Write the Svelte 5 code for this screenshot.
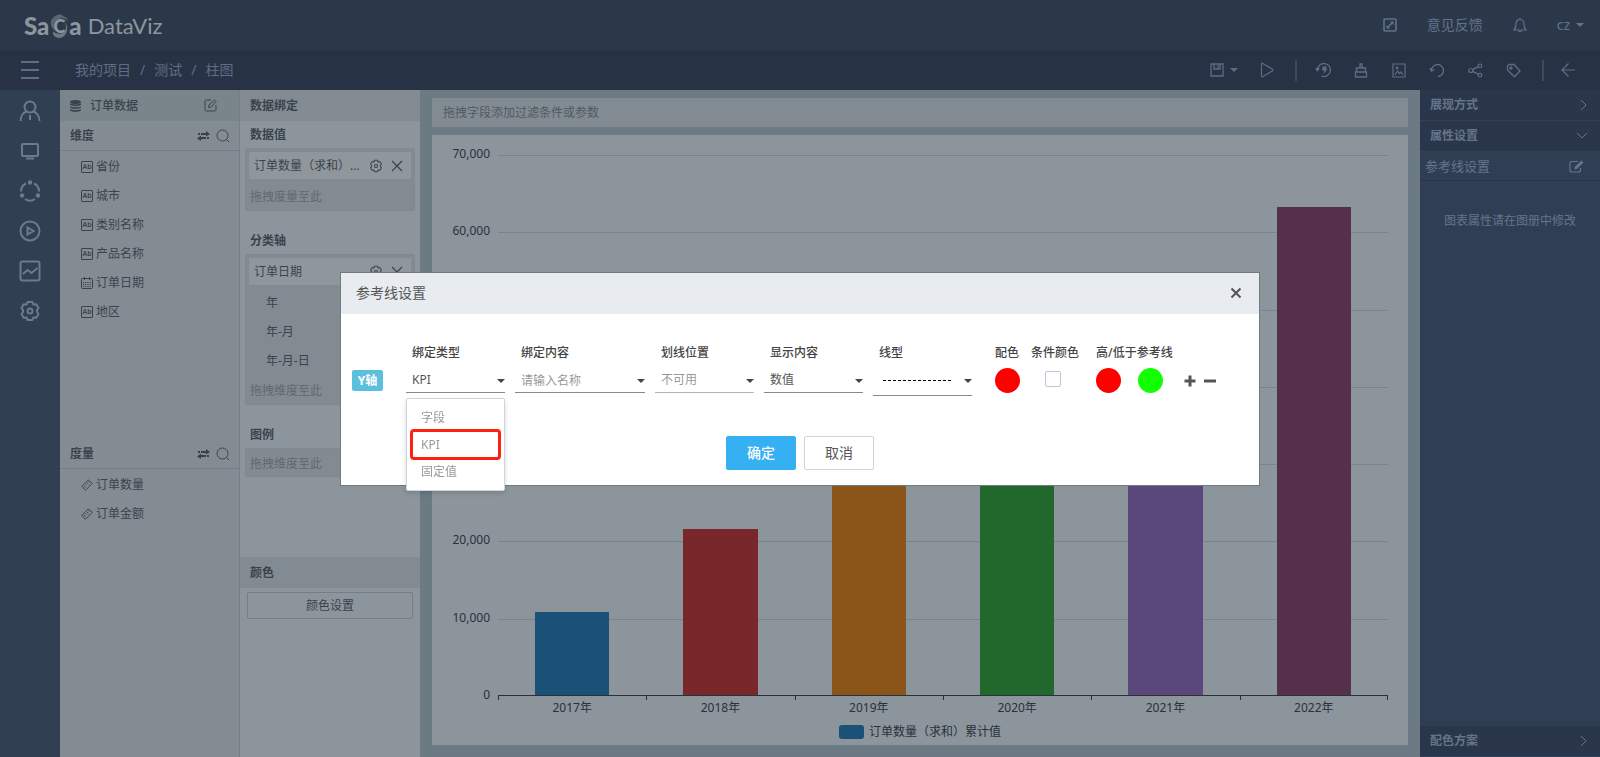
<script lang="ts">
	type Field = { name: string; kind: 'text' | 'date' | 'measure' };

	const breadcrumb = ['我的项目', '测试', '柱图'];

	const dimensions: Field[] = [
		{ name: '省份', kind: 'text' },
		{ name: '城市', kind: 'text' },
		{ name: '类别名称', kind: 'text' },
		{ name: '产品名称', kind: 'text' },
		{ name: '订单日期', kind: 'date' },
		{ name: '地区', kind: 'text' }
	];
	const measures: Field[] = [
		{ name: '订单数量', kind: 'measure' },
		{ name: '订单金额', kind: 'measure' }
	];

	const dateLevels = ['年', '年-月', '年-月-日'];

	const axisMax = 70000;
	const ticks = [70000, 60000, 50000, 40000, 30000, 20000, 10000];
	const series = [
		{ label: '2017年', value: 10700, color: '#1b5078' },
		{ label: '2018年', value: 21500, color: '#78272b' },
		{ label: '2019年', value: 35000, color: '#8b5519' },
		{ label: '2020年', value: 41000, color: '#22672c' },
		{ label: '2021年', value: 48000, color: '#5a487a' },
		{ label: '2022年', value: 63300, color: '#55304a' }
	];

	const bindTypes = ['字段', 'KPI', '固定值'];
	let bindType = $state('KPI');
	let bindContent = $state('');
	let useCondition = $state(false);
</script>

{#snippet gear()}
	<svg width="14" height="14" viewBox="0 0 22 22" fill="none" stroke="currentColor" stroke-width="1.6">
		<path d="M8.500 2h5l.8 2.500 3-.3 2.200 3.800-1.500 2v2l1.500 2-2.200 3.800-3-.3-.8 2.500h-5l-.8-2.500-3 .3L2.500 14 4 12v-2L2.500 8l2.200-3.800 3 .3z" />
		<circle cx="11" cy="11" r="2.500" />
	</svg>
{/snippet}

{#snippet cross()}
	<svg width="12" height="12" viewBox="0 0 12 12" fill="none" stroke="currentColor" stroke-width="1.2">
		<path d="M1 1l10 10M11 1L1 11" />
	</svg>
{/snippet}

{#snippet groupTools()}
	<span class="group-tools">
		<button aria-label="切换">
			<svg width="13" height="10" viewBox="0 0 13 10" fill="currentColor">
				<path d="M4 2h5V0l4 3-4 2.500V4H4zM1 2h2v2H1zM9 6H4V4.500L0 7.500 4 10V8h5zM10 6h2v2h-2z" />
			</svg>
		</button>
		<button aria-label="搜索">
			<svg width="14" height="14" viewBox="0 0 14 14" fill="none" stroke="currentColor">
				<circle cx="6.500" cy="6.500" r="5.500" />
				<path d="M10.500 10.500l2.500 2.500" />
			</svg>
		</button>
	</span>
{/snippet}

{#snippet fieldIcon(kind: string)}
	{#if kind === 'text'}
		<span class="ab">Ab</span>
	{:else if kind === 'date'}
		<svg width="12" height="12" viewBox="0 0 12 12" fill="none" stroke="currentColor">
			<rect x=".5" y="1.500" width="11" height="10" rx="1" />
			<path d="M3.500 0v3M8.500 0v3" />
			<path d="M2 5.500h8M2 7.500h8M2 9.500h8" stroke-dasharray="1.200 1" />
		</svg>
	{:else}
		<svg width="12" height="12" viewBox="0 0 12 12" fill="none" stroke="currentColor">
			<path d="M7.500.8L11.200 4.500 4.500 11.200.8 7.500z" />
			<path d="M7.500 2.500l1 1M6 4l1.500 1.500M4.500 5.500l1 1M3 7l1.500 1.500" />
		</svg>
	{/if}
{/snippet}

<div class="app">
	<header class="topbar">
		<a class="logo" href="/" aria-label="SaCa DataViz">
			<b>Sa</b>
			<span class="emblem">
				<svg width="20" height="26" viewBox="0 0 20 26">
					<path d="M2 8C4 3 8 2 12 1c0 2 6 2 7 7-4-4-9-3-12 0-3 3-2 8 0 10-4-2-6-6-5-10z" fill="#596675" />
					<path d="M4 18c2 3 8 4 11 1 3-3 2-7 1-10 3 4 3 9 0 13-3 4-10 4-12-1z" fill="#6d7883" />
				</svg>
				<b>C</b>
			</span>
			<b>a</b>
			<span class="product">DataViz</span>
		</a>
		<nav class="account">
			<button aria-label="全屏">
				<svg width="14" height="14" viewBox="0 0 14 14" fill="none" stroke="currentColor" stroke-width="1.6">
					<rect x="1" y="1" width="12" height="12" rx="1" />
					<path d="M4 10l6-6" />
					<path d="M7 3.500h3.500V7M3.500 7v3.500H7z" fill="currentColor" stroke="none" />
				</svg>
			</button>
			<a href="/feedback">意见反馈</a>
			<button aria-label="通知">
				<svg width="14" height="15" viewBox="0 0 14 15" fill="none" stroke="currentColor" stroke-width="1.2">
					<path d="M1 12h12c-2-2-2-3-2-6 0-3-2-4.500-4-4.500S3 3 3 6c0 3 0 4-2 6z" />
					<path d="M5.500 13.500h3M7 0v1.500" />
				</svg>
			</button>
			<button class="user">cz <i class="caret"></i></button>
		</nav>
	</header>

	<div class="toolbar">
		<button class="menu-toggle" aria-label="菜单"><i></i><i></i><i></i></button>
		<nav class="breadcrumb">
			{#each breadcrumb as crumb, i}
				{#if i > 0}<span>/</span>{/if}
				<a href="/">{crumb}</a>
			{/each}
		</nav>
		<div class="tools">
			<button class="save" aria-label="保存">
				<svg width="14" height="14" viewBox="0 0 14 14" fill="none" stroke="currentColor" stroke-width="1.3">
					<path d="M1 1h12v12H1zM4 1v5h6V1" />
					<path d="M8 2v3" />
				</svg>
				<i class="caret"></i>
			</button>
			<button aria-label="预览">
				<svg width="14" height="16" viewBox="0 0 14 16" fill="none" stroke="currentColor" stroke-width="1.2">
					<path d="M1.500 2.200v11.600c0 .9.700 1.200 1.400.8l9.500-5.700c.7-.4.700-1.300 0-1.700L2.900 1.400c-.7-.4-1.400-.1-1.400.8z" />
				</svg>
			</button>
			<i class="divider"></i>
			<button aria-label="历史">
				<svg width="18" height="16" viewBox="0 0 18 16" fill="none" stroke="currentColor" stroke-width="1.3">
					<path d="M3.500 8a6.500 6.500 0 1 1 4 6" />
					<path d="M1 6l2.500 4L6 6z" fill="currentColor" stroke="none" />
					<path d="M8.500 4.500h4.500l-1 2.500h1.500l-4 5 .8-3.500H8z" fill="currentColor" stroke="none" />
				</svg>
			</button>
			<button aria-label="清除">
				<svg width="14" height="15" viewBox="0 0 14 15" fill="none" stroke="currentColor" stroke-width="1.3">
					<path d="M2.500 9V5h9v4M1.500 9h11v5h-11zM6 5V1h2v4" />
				</svg>
			</button>
			<button aria-label="图片">
				<svg width="14" height="15" viewBox="0 0 14 15" fill="none" stroke="currentColor" stroke-width="1.2">
					<path d="M1 1h12v13H1zM3 12l2.500-4 2 2.500 1.500-1.500L11 12" />
					<circle cx="5" cy="5" r=".8" />
				</svg>
			</button>
			<button aria-label="撤销">
				<svg width="16" height="15" viewBox="0 0 16 15" fill="none" stroke="currentColor" stroke-width="1.3">
					<path d="M2.500 8a6 6 0 1 1 6.500 5.500M1 5l1.500 3.200L5.500 6.500" />
				</svg>
			</button>
			<button aria-label="分享">
				<svg width="15" height="15" viewBox="0 0 15 15" fill="none" stroke="currentColor" stroke-width="1.2">
					<circle cx="2.800" cy="7.500" r="2" />
					<circle cx="12" cy="2.800" r="1.800" />
					<circle cx="12" cy="12.200" r="1.800" />
					<path d="M4.600 6.600l5.800-3M4.600 8.400l5.800 3" />
				</svg>
			</button>
			<button aria-label="标签">
				<svg width="15" height="15" viewBox="0 0 15 15" fill="none" stroke="currentColor" stroke-width="1.3">
					<path d="M1.500 3l1.500-1.500h5L14 8l-5.500 5.800L1.500 7z" />
					<circle cx="5" cy="5" r="1" />
				</svg>
			</button>
			<i class="divider end"></i>
			<button aria-label="返回">
				<svg width="14" height="14" viewBox="0 0 14 14" fill="none" stroke="currentColor" stroke-width="1.2">
					<path d="M14 7H1M7.500.5L1 7l6.500 6.500" />
				</svg>
			</button>
		</div>
	</div>

	<div class="workspace">
		<nav class="sidebar">
			<a href="/user" aria-label="用户">
				<svg width="22" height="22" viewBox="0 0 22 22">
					<circle cx="11" cy="7" r="5.500" />
					<path d="M1.500 21c0-5 3-8.500 6-9.500M20.500 21c0-5-3-8.500-6-9.500M11 15v5" />
				</svg>
			</a>
			<a href="/screen" aria-label="屏幕">
				<svg width="22" height="22" viewBox="0 0 22 22">
					<rect x="3" y="4" width="16" height="12" rx="1" />
					<path d="M7 18.500h8" />
				</svg>
			</a>
			<a href="/flow" aria-label="流程">
				<svg width="22" height="22" viewBox="0 0 22 22">
					<path d="M7 3.500a9 9 0 0 0-5 8M15 3.500a9 9 0 0 1 5 8M6 19a9 9 0 0 0 10 0" />
					<g fill="currentColor" stroke="none">
						<circle cx="11" cy="2.500" r="2.200" /><circle cx="3" cy="15.500" r="2.200" /><circle cx="19" cy="15.500" r="2.200" />
					</g>
				</svg>
			</a>
			<a href="/play" aria-label="播放">
				<svg width="22" height="22" viewBox="0 0 22 22">
					<circle cx="11" cy="11" r="9.500" />
					<path d="M8.500 7.500v7l6-3.500z" />
				</svg>
			</a>
			<a href="/chart" aria-label="图表">
				<svg width="22" height="22" viewBox="0 0 22 22">
					<rect x="1.500" y="1.500" width="19" height="19" rx="2" />
					<path d="M4 14l4.500-4 4 3L18.500 8" />
				</svg>
			</a>
			<a href="/settings" aria-label="设置">
				<svg width="22" height="22" viewBox="0 0 22 22">
					<path stroke-linejoin="round" d="M8.500 2h5l.8 2.500 3-.3 2.200 3.800-1.500 2v2l1.500 2-2.200 3.800-3-.3-.8 2.500h-5l-.8-2.500-3 .3L2.500 14 4 12v-2L2.500 8l2.200-3.800 3 .3z" />
					<circle cx="11" cy="11" r="2.500" />
				</svg>
			</a>
		</nav>

		<section class="fields">
			<div class="dataset">
				<svg width="11" height="12" viewBox="0 0 11 12" fill="currentColor">
					<ellipse cx="5.500" cy="2" rx="5.500" ry="2" />
					<path d="M0 3.300c2 1.500 9 1.500 11 0v1.400c-2 1.900-9 1.900-11 0zM0 6.200c2 1.500 9 1.500 11 0v1.400c-2 1.900-9 1.900-11 0zM0 9.100c2 1.500 9 1.500 11 0v1.200c-2 2.200-9 2.200-11 0z" />
				</svg>
				<span>订单数据</span>
				<button aria-label="编辑数据">
					<svg width="13" height="13" viewBox="0 0 13 13" fill="none" stroke="currentColor">
						<path d="M7 1H2.500C1.500 1 1 1.500 1 2.500v8c0 1 .5 1.500 1.500 1.500h8c1 0 1.500-.5 1.500-1.500V6" />
						<path d="M4.500 8.500L5 6l5.500-5L12 2.500 7 8z" />
					</svg>
				</button>
			</div>
			<div class="group">
				<h3>维度 {@render groupTools()}</h3>
				<ul>
					{#each dimensions as field}
						<li>{@render fieldIcon(field.kind)}{field.name}</li>
					{/each}
				</ul>
			</div>
			<div class="group">
				<h3>度量 {@render groupTools()}</h3>
				<ul>
					{#each measures as field}
						<li>{@render fieldIcon(field.kind)}{field.name}</li>
					{/each}
				</ul>
			</div>
		</section>

		<section class="binding">
			<h3 class="band">数据绑定</h3>
			<div class="slots">
				<div class="slot">
					<h4>数据值</h4>
					<div class="drop">
						<div class="chip">
							<span>订单数量（求和）...</span>
							<button aria-label="设置">{@render gear()}</button>
							<button aria-label="移除">{@render cross()}</button>
						</div>
						<p>拖拽度量至此</p>
					</div>
				</div>
				<div class="slot">
					<h4>分类轴</h4>
					<div class="drop">
						<div class="chip">
							<span>订单日期</span>
							<button aria-label="设置">{@render gear()}</button>
							<button aria-label="移除">{@render cross()}</button>
						</div>
						<ul>
							{#each dateLevels as level}
								<li>{level}</li>
							{/each}
						</ul>
						<p>拖拽维度至此</p>
					</div>
				</div>
				<div class="slot">
					<h4>图例</h4>
					<div class="drop">
						<p>拖拽维度至此</p>
					</div>
				</div>
			</div>
			<div class="colors">
				<h3 class="band">颜色</h3>
				<button class="color-settings">颜色设置</button>
			</div>
		</section>

		<main>
			<div class="filter">拖拽字段添加过滤条件或参数</div>
			<div class="chart">
				<div class="plot">
					<div class="y-labels">
						{#each ticks as tick}
							<span>{tick.toLocaleString('en-US')}</span>
						{/each}
						<span class="zero">0</span>
					</div>
					<div class="gridlines">
						{#each ticks as tick (tick)}
							<i></i>
						{/each}
					</div>
					<div class="bars">
						{#each series as item}
							<div class="category">
								<div class="bar" style="height: {(item.value / axisMax) * 100}%; background: {item.color}"></div>
							</div>
						{/each}
					</div>
					<div class="x-labels">
						{#each series as item}
							<span>{item.label}</span>
						{/each}
					</div>
				</div>
				<div class="legend"><i></i>订单数量（求和）累计值</div>
			</div>
		</main>

		<aside class="properties">
			<button class="section">
				展现方式
				<svg width="8" height="12" viewBox="0 0 8 12"><path d="M1 1l5 5-5 5" /></svg>
			</button>
			<button class="section">
				属性设置
				<svg width="12" height="8" viewBox="0 0 12 8"><path d="M1 1l5 5 5-5" /></svg>
			</button>
			<div class="reference">
				参考线设置
				<button aria-label="编辑参考线">
					<svg width="15" height="13" viewBox="0 0 15 13" fill="none" stroke="currentColor" stroke-width="1.200">
						<path d="M9 1.500H3c-1.300 0-2 .7-2 2V10c0 1.300.7 2 2 2h6.500c1.300 0 2-.7 2-2V8" />
						<path d="M5.500 9.500l.5-3L12.500.5l2 2-6.300 6.300z" fill="currentColor" stroke="none" />
					</svg>
				</button>
			</div>
			<p>图表属性请在图册中修改</p>
			<button class="section last">
				配色方案
				<svg width="8" height="12" viewBox="0 0 8 12"><path d="M1 1l5 5-5 5" /></svg>
			</button>
		</aside>
	</div>
</div>

<div class="backdrop">
	<div class="modal" role="dialog" aria-modal="true" aria-labelledby="modal-title">
		<div class="modal-header">
			<h2 id="modal-title">参考线设置</h2>
			<button aria-label="关闭">
				<svg width="12" height="12" viewBox="0 0 12 12" fill="none" stroke="currentColor" stroke-width="2">
					<path d="M1.500 1.500l9 9M10.500 1.500l-9 9" />
				</svg>
			</button>
		</div>
		<div class="modal-body">
			<div class="line-row">
				<span class="axis-badge">Y轴</span>
				<div class="field">
					<label for="bind-type">绑定类型</label>
					<div class="control">
						<select id="bind-type" bind:value={bindType}>
							{#each bindTypes as type}
								<option>{type}</option>
							{/each}
						</select>
						<i class="caret"></i>
						<ul class="dropdown">
							{#each bindTypes as type}
								<li class:active={type === bindType}>{type}</li>
							{/each}
						</ul>
					</div>
				</div>
				<div class="field wide">
					<label for="bind-content">绑定内容</label>
					<div class="control">
						<input id="bind-content" type="text" placeholder="请输入名称" bind:value={bindContent} />
						<i class="caret"></i>
					</div>
				</div>
				<div class="field">
					<label for="position">划线位置</label>
					<div class="control disabled">
						<select id="position" disabled><option>不可用</option></select>
						<i class="caret"></i>
					</div>
				</div>
				<div class="field">
					<label for="display">显示内容</label>
					<div class="control">
						<select id="display"><option>数值</option></select>
						<i class="caret"></i>
					</div>
				</div>
				<div class="field">
					<label for="line-type">线型</label>
					<div class="control line-type">
						<select id="line-type"><option value="dashed"></option></select>
						<i class="dashes"></i>
						<i class="caret"></i>
					</div>
				</div>
				<div class="option first">
					<span>配色</span>
					<div><button class="swatch red" aria-label="配色"></button></div>
				</div>
				<div class="option">
					<label for="condition">条件颜色</label>
					<div><input id="condition" type="checkbox" bind:checked={useCondition} /></div>
				</div>
				<div class="option pair">
					<span>高/低于参考线</span>
					<div>
						<button class="swatch red" aria-label="高于参考线"></button>
						<button class="swatch green" aria-label="低于参考线"></button>
					</div>
				</div>
				<div class="row-actions">
					<button aria-label="添加">
						<svg width="12" height="12" viewBox="0 0 12 12" fill="currentColor"><path d="M4.500.5h3v4h4v3h-4v4h-3v-4h-4v-3h4z" /></svg>
					</button>
					<button aria-label="删除">
						<svg width="12" height="12" viewBox="0 0 12 12" fill="currentColor"><path d="M0 4.500h12v3H0z" /></svg>
					</button>
				</div>
			</div>
			<div class="modal-actions">
				<button class="primary">确定</button>
				<button>取消</button>
			</div>
		</div>
	</div>
</div>

<style>
	:global(body) {
		font-family: 'Noto Sans', 'Noto Sans CJK SC', sans-serif;
		font-size: 12px;
		line-height: 20px;
		color: #3a434c;
	}

	.app {
		display: flex;
		flex-direction: column;
		min-height: 100vh;
		background: #6c7a83;
	}

	button {
		font: inherit;
		color: inherit;
		background: none;
		border: 0;
		padding: 0;
		cursor: pointer;
	}
	svg {
		display: block;
		flex: none;
	}
	a {
		color: inherit;
		text-decoration: none;
	}
	ul {
		list-style: none;
		margin: 0;
		padding: 0;
	}
	h2,
	h3,
	h4,
	p {
		margin: 0;
		font-size: 12px;
	}
	.caret {
		width: 0;
		height: 0;
		border: 4px solid transparent;
		border-top-color: currentColor;
		border-bottom: 0;
	}

	.topbar {
		display: flex;
		justify-content: space-between;
		align-items: center;
		height: 50px;
		padding: 0 16px 0 24px;
		box-sizing: border-box;
		background: #2b384a;
		color: #64728a;
	}
	.logo {
		display: flex;
		align-items: center;
		padding-top: 2px;
		font-family: Lato, sans-serif;
		font-size: 24px;
		line-height: 30px;
		color: #8e969d;
	}
	.logo b {
		font-weight: 900;
	}
	.emblem {
		display: grid;
		place-items: center;
	}
	.emblem > * {
		grid-area: 1 / 1;
	}
	.emblem b {
		font-size: 18px;
	}
	.product {
		margin-left: 6px;
		font-size: 22px;
	}
	.account {
		display: flex;
		align-items: center;
		font-size: 14px;
	}
	.account a {
		margin: 0 30px;
	}
	.user {
		display: flex;
		align-items: center;
		gap: 6px;
		margin-left: 30px;
	}

	.toolbar {
		display: flex;
		align-items: center;
		height: 40px;
		background: #273344;
		color: #5e6d84;
	}
	.menu-toggle {
		display: flex;
		flex-direction: column;
		align-items: center;
		gap: 6px;
		width: 60px;
	}
	.menu-toggle i {
		width: 18px;
		height: 2px;
		background: #5e6f84;
	}
	.breadcrumb {
		display: flex;
		gap: 9px;
		margin-left: 15px;
		font-size: 14px;
	}
	.tools {
		display: flex;
		align-items: center;
		margin-left: auto;
		padding-right: 13px;
	}
	.tools button {
		display: flex;
		justify-content: center;
		width: 38px;
	}
	.tools .save {
		align-items: center;
		gap: 6px;
		width: 48px;
	}
	.divider {
		width: 2px;
		height: 21px;
		margin: 0 7px 0 9px;
		background: #424b52;
	}
	.divider.end {
		margin: 0 5px 0 10px;
	}

	.workspace {
		display: flex;
		flex: 1;
	}

	.sidebar {
		width: 60px;
		flex: none;
		padding-top: 1px;
		box-sizing: border-box;
		background: #303f52;
		color: #6b7a8c;
	}
	.sidebar a {
		display: flex;
		align-items: center;
		justify-content: center;
		height: 40px;
	}
	.sidebar svg {
		fill: none;
		stroke: currentColor;
		stroke-width: 2;
	}

	.fields {
		display: flex;
		flex-direction: column;
		width: 180px;
		flex: none;
		box-sizing: border-box;
		background: #848c93;
		border-right: 1px solid #737f88;
	}
	.dataset {
		display: flex;
		align-items: center;
		height: 31px;
		padding: 0 22px 0 10px;
		background: #7a848b;
		font-weight: 500;
	}
	.dataset span {
		flex: 1;
		margin-left: 9px;
	}
	.group {
		flex: 1;
	}
	.group h3 {
		display: flex;
		justify-content: space-between;
		align-items: center;
		height: 29px;
		padding: 0 9px 0 10px;
		border-bottom: 1px solid #717d87;
	}
	.group ul {
		padding-top: 1px;
	}
	.group-tools {
		display: flex;
		align-items: center;
		gap: 6px;
	}
	.group li {
		display: flex;
		align-items: center;
		gap: 3px;
		height: 29px;
		padding-left: 21px;
	}
	.ab {
		width: 10px;
		height: 10px;
		border: 1px solid currentColor;
		border-radius: 1px;
		font-size: 7px;
		line-height: 10px;
		text-align: center;
		font-weight: 600;
	}

	.binding {
		display: flex;
		flex-direction: column;
		width: 180px;
		flex: none;
		background: #8d959c;
	}
	.band {
		padding: 0 10px;
		line-height: 31px;
		background: #838b92;
	}
	.slots {
		flex: 1;
		padding: 0 5px;
	}
	.slot {
		margin-bottom: 16px;
	}
	.slot h4 {
		padding-left: 5px;
		line-height: 27px;
	}
	.drop {
		padding: 3px 3px 0;
		background: #838b92;
		border: 1px solid #818990;
		border-radius: 2px;
		box-sizing: border-box;
	}
	.drop p {
		padding: 4px 0 0 1px;
		line-height: 27px;
		color: #5f6970;
	}
	.drop ul {
		padding-top: 3px;
	}
	.drop ul + p {
		padding-top: 2px;
	}
	.drop p:only-child {
		padding-top: 0;
		line-height: 24px;
	}
	.drop li {
		padding-left: 17px;
		line-height: 29px;
	}
	.chip {
		display: flex;
		align-items: center;
		height: 27px;
		gap: 8px;
		padding: 0 8px 0 5px;
		background: #8f979d;
	}
	.chip span {
		flex: 1;
		white-space: nowrap;
	}
	.colors {
		flex: 0 0 200px;
	}
	.color-settings {
		display: block;
		width: calc(100% - 14px);
		height: 27px;
		margin: 4px 7px;
		border: 1px solid #737e87;
		border-radius: 2px;
	}

	main {
		display: flex;
		flex-direction: column;
		gap: 8px;
		flex: 1;
		min-width: 0;
		padding: 8px 12px 12px;
	}
	.filter {
		padding: 0 11px;
		line-height: 29px;
		background: #838b92;
		color: #505a62;
	}
	.chart {
		display: flex;
		flex-direction: column;
		flex: 1;
		padding: 20px 20px 1px;
		background: #8d959c;
		color: #29313a;
	}
	.plot {
		display: grid;
		grid-template-columns: 46px 1fr;
		grid-template-rows: 1fr 24px;
		flex: 1;
	}
	.y-labels,
	.gridlines {
		display: flex;
		flex-direction: column;
	}
	.y-labels span {
		flex: 1 1 0;
		margin-right: 8px;
		margin-top: -11px;
		margin-bottom: 11px;
		text-align: right;
	}
	.y-labels .zero {
		flex: none;
		height: 0;
	}
	.gridlines {
		grid-area: 1 / 2;
	}
	.gridlines i {
		flex: 1;
		border-top: 1px solid #7a828a;
	}
	.bars {
		grid-area: 1 / 2;
		display: flex;
		border-bottom: 1px solid #29313a;
	}
	.category {
		display: flex;
		align-items: flex-end;
		justify-content: center;
		flex: 1;
	}
	.bar {
		width: 50%;
	}
	.x-labels {
		grid-area: 2 / 2;
		display: flex;
		text-align: center;
		background: linear-gradient(#29313a, #29313a) right top / 1px 4px no-repeat;
	}
	.x-labels span {
		flex: 1;
		padding-top: 2px;
		background: linear-gradient(#29313a, #29313a) left top / 1px 4px no-repeat;
	}
	.legend {
		display: flex;
		align-items: center;
		justify-content: center;
		gap: 5px;
		height: 24px;
	}
	.legend i {
		width: 25px;
		height: 14px;
		border-radius: 3px;
		background: #1b5078;
	}

	.properties {
		display: flex;
		flex-direction: column;
		width: 180px;
		flex: none;
		background: #303e53;
		color: #66748a;
	}
	.section {
		display: flex;
		align-items: center;
		justify-content: space-between;
		height: 31px;
		padding: 0 12px 0 10px;
		background: #2a374a;
		border-bottom: 1px solid #334156;
		font-weight: 700;
	}
	.section svg {
		fill: none;
		stroke: currentColor;
	}
	.last {
		margin-top: auto;
	}
	.reference {
		display: flex;
		align-items: center;
		justify-content: space-between;
		height: 28px;
		padding: 0 16px 0 5px;
		border-bottom: 1px solid #29364a;
		font-size: 13px;
	}
	.properties p {
		margin-top: 30px;
		text-align: center;
		line-height: 20px;
	}

	.backdrop {
		position: fixed;
		inset: 0;
		display: flex;
		align-items: center;
		justify-content: center;
	}
	.modal {
		width: 920px;
		box-sizing: border-box;
		background: #fff;
		border: 1px solid #707b80;
		color: #555;
	}
	.modal-header {
		display: flex;
		align-items: center;
		justify-content: space-between;
		height: 41px;
		padding: 0 17px 0 15px;
		background: #e8ebf0;
	}
	.modal-header h2 {
		font-size: 14px;
		font-weight: 400;
	}
	.modal-body {
		padding: 29px 11px 15px;
	}
	.line-row {
		display: flex;
		align-items: flex-start;
	}
	.axis-badge {
		width: 31px;
		margin: 27px 23px 0 0;
		border-radius: 2px;
		background: #5bc0de;
		color: #fff;
		font-weight: 700;
		line-height: 21px;
		text-align: center;
	}
	.field {
		width: 99px;
		margin-right: 10px;
	}
	.field.wide {
		width: 130px;
	}
	.field label,
	.option label,
	.option > span {
		display: block;
		font-weight: 500;
		line-height: 20px;
		color: #444;
	}
	.field label {
		padding-left: 6px;
	}
	.control {
		position: relative;
		height: 29px;
		border-bottom: 1px solid #93848a;
	}
	.control select,
	.control input {
		appearance: none;
		box-sizing: border-box;
		width: 100%;
		height: 29px;
		padding: 6px 0 0 6px;
		border: 0;
		outline: 0;
		background: none;
		font: inherit;
		color: #555;
		opacity: 1;
	}
	.control input::placeholder,
	.control.disabled select {
		color: #999;
	}
	.control.disabled {
		border-color: #bcb0b4;
	}
	.control .caret {
		position: absolute;
		right: 0;
		top: 16px;
		color: #444;
	}
	.control.line-type {
		height: 32px;
	}
	.dashes {
		position: absolute;
		left: 10px;
		right: 19px;
		top: 17px;
		height: 1px;
		background: repeating-linear-gradient(90deg, #000 0 3px, transparent 3px 5px);
	}
	.dropdown {
		position: absolute;
		top: 35px;
		left: 0;
		right: 0;
		z-index: 1;
		padding: 5px 3px;
		background: #fff;
		border: 1px solid #ccd5e0;
		border-radius: 2px;
		box-shadow: 0 2px 5px rgba(0, 0, 0, 0.15);
		color: #999;
	}
	.dropdown li {
		padding: 0 11px;
		line-height: 27px;
	}
	.dropdown .active {
		margin: -2px 0;
		padding: 0 8px;
		line-height: 25px;
		border: 3px solid #ff2011;
		border-radius: 4px;
	}
	.option {
		margin-right: 11px;
	}
	.option.first {
		margin-left: 13px;
	}
	.option.pair {
		margin: 0 11px 0 6px;
	}
	.option div {
		display: flex;
		align-items: center;
		justify-content: center;
		height: 36px;
	}
	.option.pair div {
		justify-content: flex-start;
		gap: 17px;
	}
	.swatch {
		width: 25px;
		height: 25px;
		border-radius: 50%;
	}
	.red {
		background: #f00;
	}
	.green {
		background: #1f0;
	}
	.option input {
		appearance: none;
		width: 16px;
		height: 16px;
		margin: 0 4px 4px 0;
		border: 1px solid #bcc8d8;
		border-radius: 2px;
	}
	.row-actions {
		display: flex;
		gap: 8px;
		margin-top: 32px;
	}
	.modal-actions {
		display: flex;
		justify-content: center;
		gap: 8px;
		margin-top: 37px;
	}
	.modal-actions button {
		width: 70px;
		height: 34px;
		border: 1px solid #ccd5e0;
		border-radius: 2px;
		font-size: 14px;
	}
	.modal-actions .primary {
		border-color: #35b0f3;
		background: #35b0f3;
		color: #fff;
		font-weight: 500;
	}
</style>
